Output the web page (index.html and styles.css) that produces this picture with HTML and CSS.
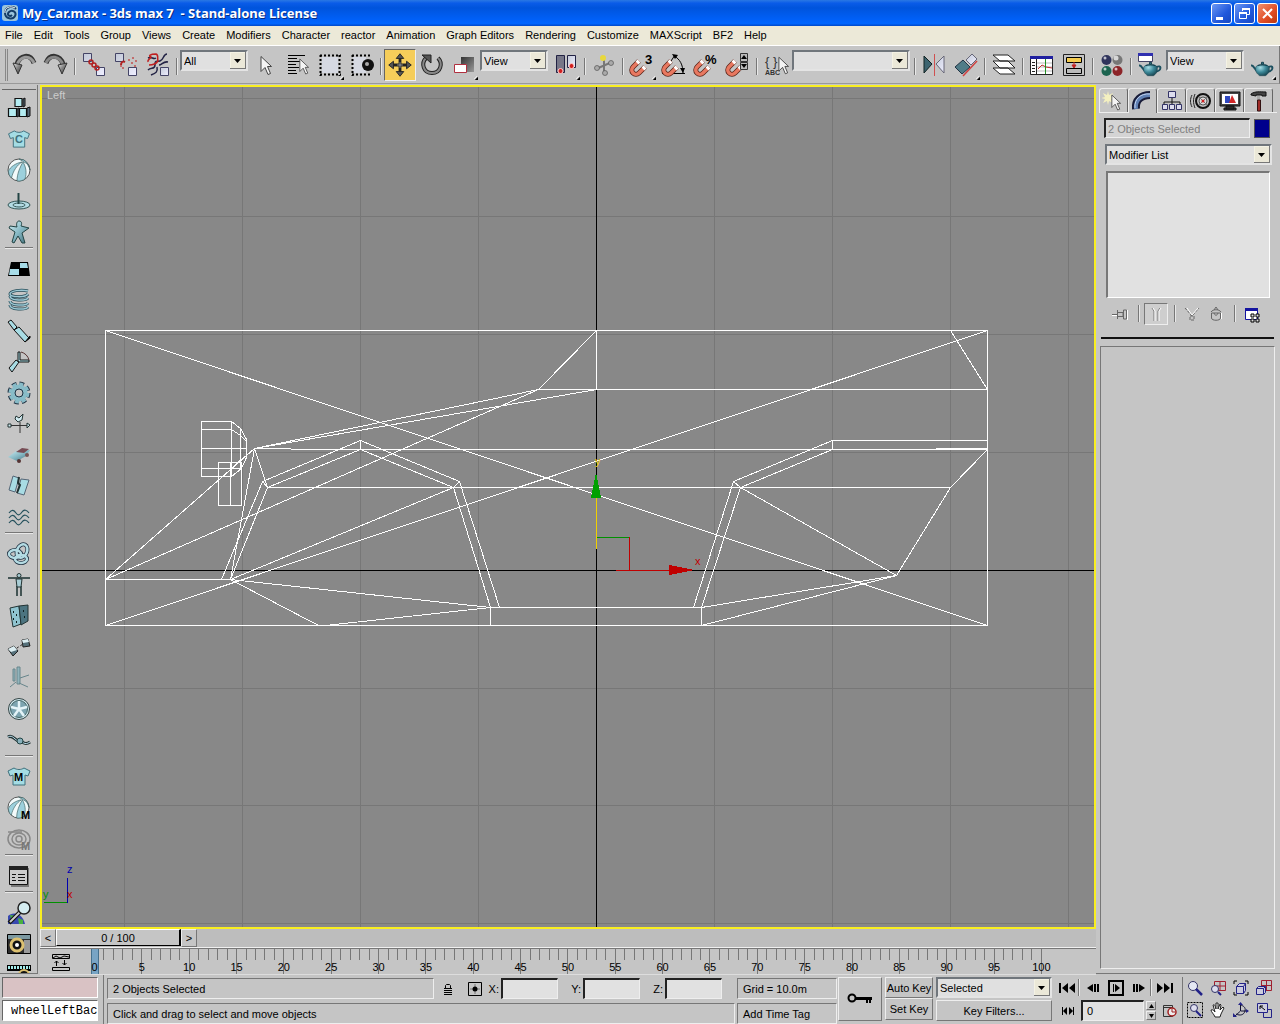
FILE: index.html
```html
<!DOCTYPE html>
<html lang="en">
<head>
<meta charset="utf-8">
<title>My_Car.max - 3ds max 7 - Stand-alone License</title>
<link rel="stylesheet" href="styles.css">
</head>
<body>
<svg class="defs" width="0" height="0" aria-hidden="true">
  <defs>
    <linearGradient id="teal" x1="0" y1="0" x2="1" y2="1"><stop offset="0" stop-color="#d2f0f4"/><stop offset=".5" stop-color="#86b8c4"/><stop offset="1" stop-color="#3d6874"/></linearGradient>
    <linearGradient id="metal" x1="0" y1="0" x2="1" y2="1"><stop offset="0" stop-color="#eee"/><stop offset=".45" stop-color="#888"/><stop offset="1" stop-color="#333"/></linearGradient>
    <linearGradient id="slab" x1="0" y1="0" x2="1" y2="1"><stop offset="0" stop-color="#333"/><stop offset="1" stop-color="#999"/></linearGradient>
    <linearGradient id="pale" x1="0" y1="0" x2="1" y2="1"><stop offset="0" stop-color="#c4cad8"/><stop offset="1" stop-color="#eef"/></linearGradient>
    <radialGradient id="pot" cx=".35" cy=".3" r=".8"><stop offset="0" stop-color="#a8dce4"/><stop offset=".5" stop-color="#3c8898"/><stop offset="1" stop-color="#123c48"/></radialGradient>
    <symbol id="magnet" viewBox="0 0 20 20"><path d="M10 4 4 10a4 4 0 0 0 6 6l6-6" fill="none" stroke="#5a2418" stroke-width="5"/><path d="M10 4 4 10a4 4 0 0 0 6 6l6-6" fill="none" stroke="#e87860" stroke-width="3.500"/><path d="m10 4-2 2M16 10l-2 2" stroke="#fff" stroke-width="4"/></symbol>
    <symbol id="cursor" viewBox="0 0 12 20"><path d="M1 1v15l4-4 3 7 2.500-1-3-7h4z" fill="#f4f4f4" stroke="#444"/></symbol>
    <symbol id="teapot" viewBox="0 0 24 16"><path d="M6 10 2 5 0 4M18 6c6-3 6 4-1 5" fill="none" stroke="#1c5060" stroke-width="2"/><path d="M5 6c2-4 12-4 14 0 1 5-2 8-4 9H9C6 13 4 10 5 6z" fill="url(#pot)" stroke="#143c48" stroke-width=".5"/><path d="M7 4.500c3-1 7-1 10 0" fill="none" stroke="#143c48"/><path d="M11 1h2v2h-2z" fill="#3c8898" stroke="#143c48"/></symbol>
    <symbol id="ball" viewBox="0 0 24 24"><circle cx="12" cy="12" r="11" fill="#f2fafa" stroke="#555"/><path d="M15 4C9 5 3 9 1.500 13c0 3 1 5 3 7C6 13 10 7 15 4zM16 4c-3 5-6 12-6 19 3 .5 6-.5 8-2 2-6 1-12-2-17zM17 4c3 1 5 4 6 8-.5-4-3-8-6-10l-5-1z" fill="#9cd0dc" stroke="#466" stroke-width=".7"/></symbol>
    <symbol id="shirt" viewBox="0 0 24 20"><path d="m1 4 6-3c3 2 7 2 10 0l6 3-2 5-3-1v10H6V8L3 9z" fill="#a4dce4" stroke="#40707c"/></symbol>
    <symbol id="flag" viewBox="0 0 5 5"><path d="M5 1v4H1z" fill="#000"/><path d="M0 4 4 0" stroke="#fff"/></symbol>
  </defs>
</svg>

<header class="titlebar">
  <svg class="logo" width="16" height="16" viewBox="0 0 16 16"><rect width="16" height="16" rx="3" fill="#9cc4dc"/><path d="M14 4C10 0 3 2 3 8s8 7 10 3-3-7-6-4 1 5 3 3" fill="none" stroke="#163c66" stroke-width="2"/><path d="M13 3C8 0 2 3 3 8" fill="none" stroke="#fff"/></svg>
  <h1>My_Car.max - 3ds max 7&nbsp; - Stand-alone License</h1>
  <button class="winbtn" aria-label="Minimize"><svg width="19" height="19" viewBox="0 0 19 19"><path d="M4 13h7v3H4z" fill="#fff"/></svg></button>
  <button class="winbtn" aria-label="Restore"><svg width="19" height="19" viewBox="0 0 19 19"><path d="M7.500 7V4.500h7v6H12M4.500 8.500h7v6h-7z" fill="none" stroke="#fff"/><path d="M7 4h8v2H7zM4 8h8v2H4z" fill="#fff"/></svg></button>
  <button class="winbtn close" aria-label="Close"><svg width="19" height="19" viewBox="0 0 19 19"><path d="m5 5 9 9m0-9-9 9" stroke="#fff" stroke-width="2"/></svg></button>
</header>

<nav class="menubar">
  <a href="#">File</a><a href="#">Edit</a><a href="#">Tools</a><a href="#">Group</a><a href="#">Views</a><a href="#">Create</a><a href="#">Modifiers</a><a href="#">Character</a><a href="#">reactor</a><a href="#">Animation</a><a href="#">Graph Editors</a><a href="#">Rendering</a><a href="#">Customize</a><a href="#">MAXScript</a><a href="#">BF2</a><a href="#">Help</a>
</nav>

<div class="toolbar">
  <button class="tool" aria-label="Undo"><svg viewBox="0 0 32 32"><path d="M26 14C22 4 12 6 9 15" fill="none" stroke="#333" stroke-width="5"/><path d="M26 14C22 5 12 7 9 16" fill="none" stroke="#999" stroke-width="3"/><path d="m5 14 9 2-4 9z" fill="url(#metal)" stroke="#333"/></svg></button>
  <button class="tool" aria-label="Redo"><svg viewBox="0 0 32 32"><path d="M6 14C10 4 20 6 23 15" fill="none" stroke="#333" stroke-width="5"/><path d="M6 14C10 5 20 7 23 16" fill="none" stroke="#888" stroke-width="3"/><path d="m27 14-9 2 4 9z" fill="url(#metal)" stroke="#333"/></svg></button>
  <span class="sep"></span>
  <button class="tool" aria-label="Select and Link"><svg viewBox="0 0 32 32"><g fill="url(#pale)" stroke="#446"><path d="M5.500 4.500h8v8h-8zM18.500 18.500h8v8h-8z"/></g><g fill="none" stroke="#b02020" stroke-width="1.500"><circle cx="13" cy="13" r="2"/><circle cx="16" cy="16" r="2"/><circle cx="19" cy="19" r="2"/></g></svg></button>
  <button class="tool" aria-label="Unlink Selection"><svg viewBox="0 0 32 32"><g fill="url(#pale)" stroke="#446"><path d="M5.500 4.500h8v8h-8zM18.500 18.500h8v8h-8z"/></g><path d="M11 16c0-3 2-4 4-3" fill="none" stroke="#b02020" stroke-width="2"/><path d="M18 11h2m2-2h2m-3 5h2m2-2h2m-3 5h2m-14 2h2m-4-2h2" stroke="#c05050" stroke-width="1.500"/></svg></button>
  <button class="tool" aria-label="Bind to Space Warp"><svg viewBox="0 0 32 32"><path d="M25 5c-4 0-3 6-7 7s-5-1-5 4-4 2-7 5m20-8c-5-1-6 3-9 3m-2 2c1 5-1 6-6 8M6 9c4-2 5 2 8 0" fill="none" stroke="#224" stroke-width="1.500"/><path d="M6 13c-1-3 3-3 3-5-3-1-1-3 5-3 3 1 1 4 2 7-2 3-4 4-9 4" fill="none" stroke="#c02020" stroke-width="1.500"/><path d="M18.500 18.500h8v8h-8z" fill="url(#pale)" stroke="#446"/></svg></button>
  <span class="sep"></span>
  <select class="combo w-short" aria-label="Selection filter"><option>All</option></select>
  <button class="tool" aria-label="Select Object"><svg viewBox="0 0 32 32"><use href="#cursor" x="10" y="6" width="12" height="21"/></svg></button>
  <button class="tool" aria-label="Select by Name"><svg viewBox="0 0 32 32"><path d="M6 6.500h17M6 9.500h9M6 12.500h12M6 15.500h8M6 18.500h11M6 21.500h8M6 24.500h9" stroke="#000"/><use href="#cursor" x="17" y="9" width="10" height="17"/></svg></button>
  <button class="tool" aria-label="Rectangular Selection Region"><svg viewBox="0 0 32 32"><path d="M8 8h16v16H8z" fill="#d6d9e2"/><path d="M6 6.500h21M6 25.500h21M6.500 6v21M25.500 6v21" stroke="#000" stroke-width="2" stroke-dasharray="2 2"/><use href="#flag" x="26" y="27" width="4" height="4"/></svg></button>
  <button class="tool" aria-label="Window / Crossing"><svg viewBox="0 0 32 32"><path d="M7 8h13v16H7z" fill="#d6d9e2"/><path d="M6 6.500h19M6 25.500h19M6.500 6v21" stroke="#000" stroke-width="2" stroke-dasharray="2 2"/><circle cx="22" cy="16" r="6" fill="#111"/><circle cx="21" cy="15" r="2" fill="#aaa"/></svg></button>
  <span class="sep"></span>
  <button class="tool active" aria-label="Select and Move"><svg viewBox="0 0 32 32"><path d="M16 7v18M7 16h18" stroke="#222" stroke-width="3"/><path d="m16 4 4 5h-8zM16 28l4-5h-8zM4 16l5-4v8zM28 16l-5-4v8z" fill="#555" stroke="#222"/><path d="M13 16h6M16 13v6" stroke="#999"/></svg></button>
  <button class="tool" aria-label="Select and Rotate"><svg viewBox="0 0 32 32"><path d="M22 9c5 5 3 15-6 15S5 14 10 9" fill="none" stroke="#222" stroke-width="4"/><path d="M22 9c5 5 3 15-6 15S5 14 10 9" fill="none" stroke="#888" stroke-width="2"/><path d="M6 6h9v8z" fill="#555" stroke="#222"/></svg></button>
  <button class="tool" aria-label="Select and Uniform Scale"><svg viewBox="0 0 32 32"><path d="M13 8h13v15H13z" fill="url(#slab)"/><path d="M6.500 15.500h12v8h-12z" fill="#fff" stroke="#b03040"/><use href="#flag" x="26" y="27" width="4" height="4"/></svg></button>
  <select class="combo w-short" aria-label="Reference coordinate system"><option>View</option></select>
  <button class="tool" aria-label="Use Pivot Point Center"><svg viewBox="0 0 32 32"><path d="M6.500 6.500h8v17h-8z" fill="#778" stroke="#224"/><path d="M17.500 6.500h8v12h-8z" fill="url(#pale)" stroke="#224"/><g fill="#d02020" stroke="#fcc"><circle cx="10.500" cy="22" r="2.500"/><circle cx="21.500" cy="17" r="2.500"/></g><use href="#flag" x="26" y="27" width="4" height="4"/></svg></button>
  <span class="sep"></span>
  <button class="tool" aria-label="Select and Manipulate"><svg viewBox="0 0 32 32"><path d="M8 20 24 13M16 9v15" stroke="#777" stroke-width="2"/><g fill="#aaa" stroke="#555" stroke-width=".7"><circle cx="9" cy="19" r="2.500"/><circle cx="23" cy="14" r="2.500"/><circle cx="17" cy="24" r="2.500"/></g><circle cx="15" cy="9" r="3" fill="#e8d83c"/></svg></button>
  <span class="sep"></span>
  <button class="tool" aria-label="3D Snap Toggle"><svg viewBox="0 0 32 32"><use href="#magnet" x="3" y="8" width="20" height="20"/><text class="glyph big" x="19" y="15">3</text><use href="#flag" x="26" y="27" width="4" height="4"/></svg></button>
  <button class="tool" aria-label="Angle Snap Toggle"><svg viewBox="0 0 32 32"><path d="M4 24.500h23M5 24 17 6M16 7c6 3 9 9 9 17" fill="none" stroke="#000"/><path d="m14 5 6 1-3 4zM22 19h5l-2 5z"/><use href="#magnet" x="3" y="8" width="20" height="20"/></svg></button>
  <button class="tool" aria-label="Percent Snap Toggle"><svg viewBox="0 0 32 32"><use href="#magnet" x="3" y="8" width="20" height="20"/><text class="glyph big" x="15" y="15">%</text></svg></button>
  <button class="tool" aria-label="Spinner Snap Toggle"><svg viewBox="0 0 32 32"><use href="#magnet" x="3" y="8" width="20" height="20"/><path d="M18.500 4.500h7v8h-7zM18.500 13.500h7v7h-7z" fill="#bbb" stroke="#333"/><path d="m22 6 3 4h-6zM22 19l3-4h-6z"/></svg></button>
  <span class="sep"></span>
  <button class="tool" aria-label="Named Selection Sets"><svg viewBox="0 0 32 32"><text class="glyph brace" x="5" y="17">{ }</text><text class="glyph tiny" x="5" y="26">ABC</text><use href="#cursor" x="18" y="7" width="11" height="19"/></svg></button>
  <select class="combo w-long" aria-label="Named selection set"><option></option></select>
  <span class="sep"></span>
  <button class="tool" aria-label="Mirror"><svg viewBox="0 0 32 32"><path d="m6 7 8 8-8 9z" fill="#3c6470" stroke="#122"/><path d="m26 7-8 8 8 9z" fill="url(#pale)" stroke="#667"/><path d="M16.500 5v22" stroke="#d05050"/></svg></button>
  <button class="tool" aria-label="Align"><svg viewBox="0 0 32 32"><path d="m5 18 8-7 7 7-8 7z" fill="#507c88" stroke="#234"/><path d="m16 11 6-6 5 5-6 6z" fill="url(#pale)" stroke="#667"/><path d="M13 27 27 12" stroke="#d04040" stroke-width="1.500"/><use href="#flag" x="26" y="27" width="4" height="4"/></svg></button>
  <span class="sep"></span>
  <button class="tool" aria-label="Layer Manager"><svg viewBox="0 0 32 32"><g fill="#fff" stroke="#222"><path d="M5 19h15l7 6H12zM5 12h15l7 7H12zM5 6h15l7 6H12z"/></g></svg></button>
  <span class="sep"></span>
  <button class="tool" aria-label="Curve Editor"><svg viewBox="0 0 32 32"><path d="M4.500 8.500h22v17h-22z" fill="#fff" stroke="#222"/><path d="M4 7h23v3H4z" fill="#2020a0"/><path d="M11 14h15M11 18h15M11 22h15" stroke="#bbb"/><path d="M6 13.500h3M6 16.500h3M6 19.500h3M6 22.500h3M10.500 10v15" stroke="#222"/><path d="m12 20 4-4 4 2 6 1" fill="none" stroke="#c03030"/><path d="M19.500 10v15" stroke="#209020"/></svg></button>
  <button class="tool" aria-label="Schematic View"><svg viewBox="0 0 32 32"><path d="M5.500 5.500h21v21h-21z" fill="none" stroke="#222"/><path d="M8.500 8.500h15v5h-15z" fill="#f4cc50" stroke="#000"/><path d="M8.500 19.500h15v5h-15z" fill="#bbb" stroke="#000"/><path d="M16 13v4m-2-1h4l-2 3z" fill="#c02020" stroke="#c02020"/></svg></button>
  <span class="sep"></span>
  <button class="tool" aria-label="Material Editor"><svg viewBox="0 0 32 32"><circle cx="10.500" cy="11" r="5" fill="#30345c"/><circle cx="21.500" cy="11" r="5" fill="#777"/><circle cx="10.500" cy="22" r="5" fill="#1c6450"/><circle cx="21.500" cy="22" r="5" fill="#8c2428"/><g fill="#fff" opacity=".7"><circle cx="9" cy="9" r="1.500"/><circle cx="20" cy="9" r="2.500"/><circle cx="9" cy="20" r="1.500"/><circle cx="20" cy="20" r="1.500"/></g></svg></button>
  <span class="sep"></span>
  <button class="tool" aria-label="Render Scene"><svg viewBox="0 0 32 32"><path d="M4.500 4.500h14v8h-14z" fill="#fff" stroke="#446"/><path d="M4 4h15v3H4z" fill="#3030b0"/><use href="#teapot" x="5" y="12" width="23" height="16"/></svg></button>
  <select class="combo w-mid" aria-label="Render type"><option>View</option></select>
  <button class="tool" aria-label="Quick Render"><svg viewBox="0 0 32 32"><use href="#teapot" x="5" y="12" width="23" height="16"/><use href="#flag" x="26" y="27" width="4" height="4"/></svg></button>
</div>

<main class="workspace">
  <aside class="reactor" aria-label="reactor toolbar">
    <button class="rtool" aria-label="Rigid Body Collection"><svg viewBox="0 0 24 24"><g fill="#b4ecf2" stroke="#111" stroke-width="1.200"><path d="M8 2.500h7v8H8zM1.500 12.500h8v8h-8zM12.500 12.500h7v8h-7z"/></g><path d="m16 3 2-1v8l-2 1zM20 12l3-1v9l-3 1zM10 13l2-1v8l-2 1z" fill="#567" stroke="#111"/></svg></button>
    <button class="rtool" aria-label="Cloth Collection"><svg viewBox="0 0 24 24"><use href="#shirt" y="3" width="24" height="19"/><text class="glyph mark" x="8" y="16">C</text></svg></button>
    <button class="rtool" aria-label="Soft Body Collection"><svg viewBox="0 0 24 24"><use href="#ball" width="24" height="24"/></svg></button>
    <button class="rtool" aria-label="Rope Collection"><svg viewBox="0 0 24 24"><ellipse cx="12" cy="16" rx="11" ry="4" fill="#b4dce4" stroke="#355"/><ellipse cx="12" cy="16" rx="6" ry="2" fill="none" stroke="#355"/><path d="M11.500 4v11" stroke="#244" stroke-width="2"/></svg></button>
    <button class="rtool" aria-label="Deforming Mesh Collection"><svg viewBox="0 0 24 24"><path d="M12 1c3 0 3 3 2 5l8 2-7 5 3 10h-3l-4-7-4 7-2-1 3-10-6-4 1-2 7 1c-1-3 0-6 2-6z" fill="url(#teal)" stroke="#244"/></svg></button>
    <span class="rsep"></span>
    <button class="rtool" aria-label="Plane"><svg viewBox="0 0 24 24"><path d="M4 5h17l2 14H1z"/><path d="M13 6h7l1 5h-8zM3 12h9v6H2z" fill="#a8dce8"/></svg></button>
    <button class="rtool" aria-label="Spring"><svg viewBox="0 0 24 24"><g fill="none" stroke="#264c58" stroke-width="3"><path d="M21 3C14 1 3 3 3 6s15 4 18 0M3 8c0 5 16 5 18 2M3 13c0 5 16 5 18 2M3 17c0 5 16 5 18 2"/></g><g fill="none" stroke="#9cc8d4" stroke-width="1.500"><path d="M21 3C14 1 3 3 3 6s15 4 18 0M3 8c0 5 16 5 18 2M3 13c0 5 16 5 18 2M3 17c0 5 16 5 18 2"/></g></svg></button>
    <button class="rtool" aria-label="Linear Dashpot"><svg viewBox="0 0 24 24"><path d="m1 3 3-2 6 7-3 3zM7 11l5-3 10 11-4 4z" fill="#a8dce4" stroke="#111"/><path d="m18 23 5-4v-2z" stroke="#111"/></svg></button>
    <button class="rtool" aria-label="Angular Dashpot"><svg viewBox="0 0 24 24"><path d="M11 2v10h11v-2h-9V2zM12 12l-3-2-7 8 3 4z" fill="#a8dce4" stroke="#111"/><path d="M14 2c4 1 7 4 8 8" fill="none" stroke="#533"/></svg></button>
    <button class="rtool" aria-label="Motor"><svg viewBox="0 0 24 24"><circle cx="12" cy="12" r="9.500" fill="none" stroke="#234" stroke-width="4" stroke-dasharray="4.500 3"/><circle cx="12" cy="12" r="9" fill="none" stroke="#88bcc8" stroke-width="3" stroke-dasharray="4 3.070"/><circle cx="12" cy="12" r="6" fill="none" stroke="#88bcc8" stroke-width="5"/><circle cx="12" cy="12" r="4" fill="none" stroke="#234"/></svg></button>
    <button class="rtool" aria-label="Wind"><svg viewBox="0 0 24 24"><path d="M1 13.500h22M13 10v11" stroke="#333"/><path d="m9 4 3 2 4-4-1 6-4 2-3-3zM1 12h3v3H1zM20 11l3 2-3 3z" fill="#cfeaf0" stroke="#233"/></svg></button>
    <button class="rtool" aria-label="Toy Car"><svg viewBox="0 0 24 24"><path d="M1 14 9 8l14-1-4 6-9 5z" fill="url(#teal)"/><path d="m9 9 6-4 7 1-5 4z" fill="#764c54"/><circle cx="12" cy="18" r="2" fill="#533"/><circle cx="20" cy="12" r="2" fill="#755"/></svg></button>
    <button class="rtool" aria-label="Fracture"><svg viewBox="0 0 24 24"><path d="m6 2 6 2-4 14-6-2zM14 5l8 1-5 15-7-2z" fill="#a8dce4" stroke="#567"/><path d="m12 3-1 6 2 2-3 8" fill="none" stroke="#233" stroke-width="2"/></svg></button>
    <button class="rtool" aria-label="Water"><svg viewBox="0 0 24 24"><path d="M2 8c3-4 5-3 7 0s4 2 6-1 5-2 7 1M2 13c3-4 5-3 7 0s4 2 6-1 5-2 7 1M2 18c3-4 5-3 7 0s4 2 6-1 5-2 7 1" fill="none" stroke="#24505c" stroke-width="1.200"/></svg></button>
    <span class="rsep"></span>
    <button class="rtool" aria-label="Constraint Solver"><svg viewBox="0 0 24 24"><g fill="none" stroke="#234" stroke-width="4"><ellipse cx="15" cy="9" rx="5" ry="7" transform="rotate(25 15 9)"/><ellipse cx="8" cy="12" rx="6" ry="4"/><ellipse cx="14" cy="17" rx="6" ry="4"/></g><g fill="none" stroke="#b4dce4" stroke-width="2.500"><ellipse cx="15" cy="9" rx="5" ry="7" transform="rotate(25 15 9)"/><ellipse cx="8" cy="12" rx="6" ry="4"/><ellipse cx="14" cy="17" rx="6" ry="4"/></g></svg></button>
    <button class="rtool" aria-label="Rag Doll Constraint"><svg viewBox="0 0 24 24"><path d="M1 5h22M12 1v12M10 13v10M14 13v10" stroke="#455" stroke-width="2"/><path d="M9 6h6l-1 8h-4z" fill="#a8ccd4" stroke="#233"/><circle cx="12" cy="2.500" r="2" fill="#a8ccd4" stroke="#233"/></svg></button>
    <button class="rtool" aria-label="Hinge Constraint"><svg viewBox="0 0 24 24"><path d="m3 4 9-2 2 18-8 3z" fill="#90c4d0" stroke="#233"/><path d="m12 2 9-1v16l-7 4z" fill="#4c7480" stroke="#233"/><path d="M6 8h1m2 3h1m-4 4h1m2 3h1m6-11h1m0 6h1" stroke="#122" stroke-width="2"/></svg></button>
    <button class="rtool" aria-label="Point-Point Constraint"><svg viewBox="0 0 24 24"><path d="m1 14 6-3 4 5-5 5zM15 5l6-1 2 7-7 1z" fill="#55707a" stroke="#222"/><path d="m1 14 6-3 3 4-6 2zM15 5l6-1 1 3-6 1z" fill="#dceef2"/><path d="m10 13 6-4" stroke="#222" stroke-dasharray="2 2"/></svg></button>
    <button class="rtool" aria-label="Prismatic Constraint"><svg viewBox="0 0 24 24"><path d="M6 3h2v12H6zM10 1h3v17h-3zM13 12l9-3M12 17l9 4M9 16l-6 5" fill="#90b4bc" stroke="#68868c"/></svg></button>
    <button class="rtool" aria-label="Car-Wheel Constraint"><svg viewBox="0 0 24 24"><circle cx="12" cy="12" r="10.500" fill="#cfe8ee" stroke="#344"/><circle cx="12" cy="12" r="8.500" fill="#7ca4b0" stroke="#466"/><path d="M12 12V4m0 8 8-2m-8 2 5 7m-5-7-5 7m5-7-8-2" stroke="#e4f4f8" stroke-width="2.500"/></svg></button>
    <button class="rtool" aria-label="Point-Path Constraint"><svg viewBox="0 0 24 24"><path d="M1 9c5-3 7 4 11 4s5 5 11 1" fill="none" stroke="#233" stroke-width="3"/><path d="M1 9c5-3 7 4 11 4s5 5 11 1" fill="none" stroke="#bde"/><circle cx="13" cy="13" r="3" fill="#88b0bc" stroke="#244"/></svg></button>
    <span class="rsep"></span>
    <button class="rtool" aria-label="Cloth Modifier"><svg viewBox="0 0 24 24"><use href="#shirt" y="2" width="24" height="20"/><text class="glyph mark dark" x="7" y="16">M</text></svg></button>
    <button class="rtool" aria-label="Soft Body Modifier"><svg viewBox="0 0 24 24"><use href="#ball" width="23" height="23"/><text class="glyph mark dark" x="14" y="23">M</text></svg></button>
    <button class="rtool" aria-label="Rope Modifier" disabled><svg viewBox="0 0 24 24"><g fill="none" stroke="#888" stroke-width="1.500"><ellipse cx="12" cy="12" rx="11" ry="9"/><ellipse cx="12" cy="12" rx="7" ry="6"/><ellipse cx="12" cy="12" rx="3" ry="3"/><path d="M1 5h14"/></g><text class="glyph mark dim" x="14" y="23">M</text></svg></button>
    <span class="rsep"></span>
    <button class="rtool" aria-label="Property Editor"><svg viewBox="0 0 24 24"><path d="M4 4h18v19H4z" fill="#777"/><path d="M2.500 2.500h18v18h-18z" fill="#ccc" stroke="#111"/><path d="M2 2h19v4H2z" fill="#222"/><path d="M5 10.500h4m2 0h7M5 13.500h3m3 0h7M5 16.500h4m2 0h7" stroke="#111"/></svg></button>
    <span class="rsep"></span>
    <button class="rtool" aria-label="Analyze World"><svg viewBox="0 0 24 24"><path d="M1 15c4-4 14-4 17 8H1z" fill="#3848b0"/><path d="m3 14 6 1-4 6zM11 17l5 2v4h-4z" fill="#48b040"/><path d="M13 11 2 22" stroke="#111" stroke-width="4"/><path d="M13 11 3 21" stroke="#ccc" stroke-width="2"/><circle cx="17" cy="7" r="6" fill="#d4ecf0" stroke="#222" stroke-width="1.500"/></svg></button>
    <button class="rtool" aria-label="Preview Animation"><svg viewBox="0 0 24 24"><path d="M.5 2.500h23v19H.5z" fill="#2c2c2c" stroke="#000"/><path d="M1 3h22v4H1z" fill="#7c98a0"/><path d="M17 8h6v13h-6z" fill="#999"/><circle cx="10" cy="13" r="6" fill="#111" stroke="#dcc070" stroke-width="3"/><circle cx="10" cy="13" r="2" fill="#fff"/></svg></button>
    <button class="rtool" aria-label="Create Animation"><svg viewBox="0 0 24 24"><path d="M0 2h24v6H0z"/><path d="M1 4.500h22" stroke="#a4ecec" stroke-width="3" stroke-dasharray="2 1"/><circle cx="17" cy="12" r="5" fill="#111" stroke="#dcc070" stroke-width="2"/></svg></button>
  </aside>

  <section class="center">
    <div class="viewport">
      <svg class="scene" viewBox="42 87 1052 840" preserveAspectRatio="xMidYMid slice" role="img" aria-label="Left view wireframe">
        <path class="grid" d="M124.500 87v840M242.500 87v840M360.500 87v840M478.500 87v840M714.500 87v840M832.500 87v840M950.500 87v840M1068.500 87v840M42 98.500h1052M42 216.500h1052M42 334.500h1052M42 452.500h1052M42 688.500h1052M42 805.500h1052M42 923.500h1052"/>
        <path class="axis" d="M596.500 87v840M42 570.500h1052"/>
        <path class="wire" d="M105.500 330.500h882v295h-882zM105.500 330.500l882 295M105.500 625.500l882-295
          M105.500 579.500h125M105.500 579.500l149-131M105.500 579.500l433-190M254.500 448.500l284-59M254.500 448.500l342-59
          M254.500 448.500h36M290.500 449.500h697M254.500 448.500l13 39M254.500 448.500l-24 131
          M221.500 579.500l41-98 98-41 99 41 40 126M230.500 579.500l37-92 93-38 93 38 37 120M262.500 481.500l5 6M459.500 481.500l-6 6M360.500 440.500v9
          M267.500 487.500h683M230.500 579.500l223-92M230.500 579.500l260 28M230.500 579.500l88 46M490.500 607.500l-165 18
          M490.500 625.500v-18h211v18M596.500 330.500v59M596.500 330.500l-58 59h449M950.500 330.500l37 59
          M987.500 440.500h-155v9M832.500 440.500l-99 41-40 126M832.500 449.500l-92 38-39 120M733.500 481.500l7 6
          M740.500 487.500l156 88M987.500 449.500l-37 38-54 88-195 32M701.500 625.500l195-50M936 448.500h51
          M231.500 421.500h-30v55h30zM201.500 429.500h30M201.500 448.500h45M201.500 468.500h40M231.500 421.500l9 7 6 11v18l-5 11-10 8M231.500 429.500l9 6 6 6M240.500 428.500v40M231.500 468.500l14-13
          M218.500 462.500h23v43h-23zM230.500 462.500v43"/>
        <path class="yellow" d="M596.500 498v51"/>
        <path class="green" d="M597 537.500h32M44 902.500h23"/>
        <path class="red" d="M629.500 537v33M616 570.500h54"/>
        <path class="blue" d="M67.500 878v25"/>
        <path fill="#00a000" d="M596 472l5 26h-10z"/>
        <path fill="#c00000" d="M694 570l-25 5v-10z"/>
        <text class="mark-y" x="595" y="465">y</text>
        <text class="mark-x" x="695" y="565">x</text>
        <text class="mark-z" x="67" y="873">z</text>
        <text class="mark-g" x="43" y="898">y</text>
        <text class="mark-x" x="67" y="898">x</text>
        <text class="view-name" x="47" y="99">Left</text>
      </svg>
    </div>
    <div class="timeslider">
      <button class="step" aria-label="Previous frame">&lt;</button>
      <button class="thumb">0 / 100</button>
      <button class="step" aria-label="Next frame">&gt;</button>
    </div>
    <div class="trackbar">
      <button class="curve" aria-label="Open Mini Curve Editor"><svg width="18" height="18" viewBox="0 0 18 18"><path d="M.5 1.500h17v4H.5zM.5 14.500h17v3H.5zM1 5l3-2 4 2 4-2 5 1M4.500 13V8m-2 2 2-2 2 2M12.500 7v5m-2-2 2 2 2-2" fill="none" stroke="#000"/></svg></button>
      <div class="ruler" id="ruler"></div>
    </div>
  </section>

  <aside class="panel">
    <div class="tabs">
      <button class="tab" aria-label="Create"><svg viewBox="0 0 24 22"><path d="m6 1 1 4 4-2-2 4 4 1-4 1 2 4-4-2-1 4-1-4-4 2 2-4-4-1 4-1-2-4 4 2z" fill="#f4f0c0"/><use href="#cursor" x="9" y="4" width="10" height="17"/></svg></button>
      <button class="tab on" aria-label="Modify"><svg viewBox="0 0 24 22"><path d="M5 19C4 10 10 5 19 5" fill="none" stroke="#181c38" stroke-width="8"/><path d="M5 19C4 10 10 5 19 5" fill="none" stroke="#6080b4" stroke-width="4"/><path d="M4 18C3 9 10 3 19 4" fill="none" stroke="#c4d4f0"/></svg></button>
      <button class="tab" aria-label="Hierarchy"><svg viewBox="0 0 24 22"><path d="M12 8v7M4 15V12h16v3" fill="none" stroke="#111"/><path d="M8.500 1.500h7v6h-7zM2.500 14.500h5v5h-5zM9.500 14.500h5v5h-5zM16.500 14.500h5v5h-5z" fill="#dde" stroke="#336"/></svg></button>
      <button class="tab" aria-label="Motion"><svg viewBox="0 0 24 22"><path d="M3 5c-2 4-2 8 0 12M6 4c-2 5-2 9 0 14" fill="none" stroke="#222"/><circle cx="14" cy="11" r="7" fill="#bbb" stroke="#111" stroke-width="2"/><circle cx="14" cy="11" r="4" fill="#ddd" stroke="#555"/><path d="M10 7l8 8m0-8-8 8" stroke="#777"/><circle cx="14" cy="11" r="1.500" fill="#c22"/></svg></button>
      <button class="tab" aria-label="Display"><svg viewBox="0 0 24 22"><path d="M2 2h20v14H2zM8 16h8v3H8zM6 18h12v2H6z" fill="#444" stroke="#111"/><path d="M4 4h16v10H4z" fill="#fff"/><path d="M7 6h5v7H7z" fill="#3048c0"/><path d="m14 5 4 8h-7z" fill="#d02828"/></svg></button>
      <button class="tab" aria-label="Utilities"><svg viewBox="0 0 24 22"><path d="M4 4c4-3 9-2 15-2v4h-4V5H9v1L4 5z" fill="#444" stroke="#111"/><path d="M10 6h3v5h-3z" fill="#aaa"/><path d="M10.500 10h3v11h-3z" fill="#a02c28" stroke="#311"/></svg></button>
    </div>
    <div class="name-row">
      <input class="name" aria-label="Object name" value="2 Objects Selected" disabled>
      <button class="swatch" aria-label="Object color"></button>
    </div>
    <select class="combo modifier" aria-label="Modifier"><option>Modifier List</option></select>
    <div class="stack" role="listbox" aria-label="Modifier stack"></div>
    <div class="stack-tools">
      <button class="mini" aria-label="Pin Stack"><svg viewBox="0 0 20 20"><path d="M2 10.500h5M7.500 6v9M8 8.500h5v4H8M13.500 6v9h3V6z" fill="none" stroke="#666"/><path d="M2 11.500h5M17.500 6v10" stroke="#fff"/></svg></button>
      <span class="sep"></span>
      <button class="mini boxed" aria-label="Show End Result"><svg viewBox="0 0 20 20"><path d="m6 4 2 3v10M14 4l-2 3v10" fill="none" stroke="#777"/><path d="m7 4 2 3v10M15 4l-2 3v10" fill="none" stroke="#fff"/></svg></button>
      <span class="sep"></span>
      <button class="mini" aria-label="Make Unique"><svg viewBox="0 0 20 20"><path d="m3 4 7 8 7-8M8 12h4v4H8z" fill="none" stroke="#666" stroke-dasharray="3 1"/><path d="m5 4 5 7 6-7" fill="none" stroke="#fff"/></svg></button>
      <button class="mini" aria-label="Remove Modifier"><svg viewBox="0 0 20 20"><path d="M5.500 9v5c0 3 9 3 9 0V9zM5 8c2-3 8-3 10 0M8 6l2-3 2 3M8 9c1 3 3 3 4 0" fill="none" stroke="#666"/><path d="M15.500 9v6" stroke="#fff"/></svg></button>
      <span class="sep"></span>
      <button class="mini" aria-label="Configure Modifier Sets"><svg viewBox="0 0 20 20"><path d="M3.500 4.500h12v11h-12z" fill="#fff" stroke="#1414a0"/><path d="M3 4h13v3H3z" fill="#1414a0"/><path d="M9 10h3v3H9zM14 10h3v3h-3zM9 15h3v3H9zM14 15h3v3h-3z" fill="#ddd" stroke="#000"/></svg></button>
    </div>
    <div class="rollup"></div>
  </aside>
</main>

<footer class="status">
  <div class="listener">
    <input class="macro" aria-label="Macro recorder">
    <input class="script" aria-label="MAXScript listener" value="wheelLeftBack">
  </div>
  <div class="messages">
    <div class="line">
      <output class="sunken">2 Objects Selected</output>
      <button class="lock" aria-label="Selection Lock Toggle"><svg width="12" height="14" viewBox="0 0 12 14"><path d="M3.500 6V3.500l1-1h3l1 1V6" fill="none" stroke="#000"/><path d="M2 6.500h8M2 8.500h8M2 10.500h8M2 12.500h8" stroke="#000"/></svg></button>
      <button class="lock" aria-label="Absolute Mode Transform Type-In"><svg width="16" height="16" viewBox="0 0 16 16"><path d="M1.500 1.500h13v13h-13z" fill="none" stroke="#000"/><path d="M8 3v10M3 8h10" stroke="#777"/><circle cx="8" cy="8" r="2.500"/></svg></button>
      <label for="cx">X:</label><input class="coord" id="cx">
      <label for="cy">Y:</label><input class="coord" id="cy">
      <label for="cz">Z:</label><input class="coord" id="cz">
    </div>
    <output class="sunken prompt">Click and drag to select and move objects</output>
  </div>
  <div class="gridinfo">
    <output class="sunken">Grid = 10.0m</output>
    <button class="sunken tag">Add Time Tag</button>
  </div>
  <button class="raised key" aria-label="Set Keys"><svg width="26" height="14" viewBox="0 0 26 14"><circle cx="5" cy="6" r="3.500" fill="none" stroke="#000" stroke-width="2"/><path d="M9 5h16v3h-1v3h-2V8h-1v3h-2V8H9z"/></svg></button>
  <div class="keys">
    <button class="raised">Auto Key</button>
    <button class="raised">Set Key</button>
  </div>
  <div class="filters">
    <select class="combo" aria-label="Key set"><option>Selected</option></select>
    <button class="raised">Key Filters...</button>
  </div>
  <div class="playback">
    <div class="line">
      <button class="play" aria-label="Go to Start"><svg width="18" height="12" viewBox="0 0 18 12"><path d="M1 1h2v10H1zM10 1v10L4 6zM17 1v10l-6-5z"/></svg></button>
      <span class="sep"></span>
      <button class="play" aria-label="Previous Frame"><svg width="18" height="12" viewBox="0 0 18 12"><path d="M9 2v8L3 6zM10 2h2v8h-2zM13 2h2v8h-2z"/></svg></button>
      <button class="play" aria-label="Play"><svg width="18" height="16" viewBox="0 0 18 16"><path d="M2 1h14v14H2z" fill="none" stroke="#000" stroke-width="2"/><path d="M6 4h1v8H6zM8 4l5 4-5 4z"/></svg></button>
      <button class="play" aria-label="Next Frame"><svg width="18" height="12" viewBox="0 0 18 12"><path d="m9 2 6 4-6 4zM6 2h2v8H6zM3 2h2v8H3z"/></svg></button>
      <span class="sep"></span>
      <button class="play" aria-label="Go to End"><svg width="18" height="12" viewBox="0 0 18 12"><path d="M15 1h2v10h-2zM8 1v10l6-5zM1 1v10l6-5z"/></svg></button>
    </div>
    <div class="line">
      <button class="play mode" aria-label="Key Mode Toggle"><svg width="12" height="10" viewBox="0 0 12 10"><path d="M0 1h1v8H0zM11 1h1v8h-1zM5 1v8L1 5zM7 1v8l4-4z"/></svg></button>
      <input class="frame" type="text" aria-label="Current frame" value="0">
      <span class="spinner"><button aria-label="Up"><svg width="7" height="4" viewBox="0 0 7 4"><path d="M3.500 0 6 4H1z"/></svg></button><button aria-label="Down"><svg width="7" height="4" viewBox="0 0 7 4"><path d="M3.500 4 6 0H1z"/></svg></button></span>
      <button class="play" aria-label="Time Configuration"><svg width="14" height="14" viewBox="0 0 14 14"><path d="M.5 1.500h9v11h-9zM1 3.500h8" fill="none" stroke="#333"/><circle cx="9" cy="8" r="4" fill="#eee" stroke="#a02020" stroke-width="1.500"/><path d="M9 5v3h3" fill="none" stroke="#a02020"/></svg></button>
    </div>
  </div>
  <div class="nav">
    <button aria-label="Zoom"><svg viewBox="0 0 16 16"><circle cx="6" cy="6" r="4.500" fill="#e4e8f4" stroke="#336"/><path d="m9 9 6 6" stroke="#228" stroke-width="2.500"/></svg></button>
    <button aria-label="Zoom All"><svg viewBox="0 0 16 16"><path d="M4.500 1.500h11v9h-11zM10 1v10M4 6h12" fill="none" stroke="#a02030"/><circle cx="5" cy="9" r="3.500" fill="#dde" stroke="#336"/><path d="m8 12 3 3" stroke="#228" stroke-width="2"/></svg></button>
    <button aria-label="Zoom Extents"><svg viewBox="0 0 16 16"><path d="M3.500 6.500h7v7h-7zM3.500 6.500l3-3h6v7l-2 3M10.500 6.500l2-3" fill="#ccd" stroke="#228"/><path d="M1 4V1h3M12 1h3v3M1 12v3h3M12 15h3v-3" fill="none" stroke="#000"/></svg></button>
    <button aria-label="Zoom Extents All"><svg viewBox="0 0 16 16"><path d="M5.500.5h10v10h-10zM10.500 0v11M5 5.500h11" fill="none" stroke="#a02030"/><path d="M.5 8.500h7v6h-7zM.5 8.500l2-2h7v6l-2 2M7.500 8.500l2-2" fill="#ccd" stroke="#228"/></svg></button>
    <button aria-label="Region Zoom"><svg viewBox="0 0 16 16"><path d="M.5.500h15v15H.5z" fill="none" stroke="#000" stroke-dasharray="2 1"/><circle cx="7" cy="6" r="3.500" fill="#dde" stroke="#336"/><path d="m9 9 5 5" stroke="#228" stroke-width="2"/></svg></button>
    <button aria-label="Pan"><svg viewBox="0 0 16 16"><path d="M5 15c-1-3-4-5-4-7 2-1 3 1 4 2L3 3c2-1 2 1 3 4V1h2v6l2-5 1 1-1 5 3-3 1 1-3 6-1 3z" fill="#fff" stroke="#222"/></svg></button>
    <button aria-label="Arc Rotate"><svg viewBox="0 0 16 16"><path d="M7.500 2v7L2 14M8 9h7M3 12c4 2 8 1 9-3S10 4 8 3" fill="none" stroke="#113"/><path d="m5 3 2.500-3L10 3zM0 15v-4l4 4zM13 7l3 2-3 2z" fill="#228"/></svg></button>
    <button aria-label="Min/Max Toggle"><svg viewBox="0 0 16 16"><path d="M7.500 7.500h8v8h-8z" fill="none" stroke="#228"/><path d="M1.500 1.500h10v9h-10z" fill="#ccd" stroke="#228"/><path d="M4 4l5 4M4 7V4h3" fill="none" stroke="#000"/></svg></button>
  </div>
</footer>
<script src="ruler.js"></script>
</body>
</html>
```
FILE: ruler.js
```js
// Builds the frame ticks of the track bar: one per frame, numbered every fifth.
const ruler = document.getElementById("ruler");
for (let frame = 0; frame <= 100; frame++) {
  const tick = document.createElement("span");
  tick.className = "tick";
  if (frame % 5 === 0) {
    tick.classList.add("major");
    const label = document.createElement("b");
    label.textContent = frame;
    tick.append(label);
  }
  if (frame === 0) tick.classList.add("current");
  ruler.append(tick);
}
```
FILE: styles.css
```css
* { box-sizing: border-box; }
body {
  margin: 0;
  min-height: 100vh;
  display: flex;
  flex-direction: column;
  background: #c5c5c5;
  color: #000;
  font: 11px/14px "Liberation Sans", Arial, sans-serif;
}
button, input, select { font: inherit; color: inherit; margin: 0; padding: 0; border: 0; border-radius: 0; background: none; }
button { display: flex; align-items: center; justify-content: center; }
svg { display: block; flex: none; }
.defs { position: absolute; }
.sep { flex: none; width: 6px; height: 17px; border-left: 1px solid #777; margin: 0; background: linear-gradient(90deg, #e8e8e8 1px, transparent 1px); }

/* title bar and menu */
.titlebar {
  display: flex; align-items: center; gap: 2px;
  height: 26px; padding: 0 2px;
  background: linear-gradient(#2a78e4, #0a5ce8 12%, #0054dc 30%, #0060f8 75%, #0066ff 90%, #0048c8);
}
.titlebar h1 {
  flex: 1; margin: 0 0 0 2px; color: #fff; white-space: nowrap;
  font: 700 13px/20px "Noto Sans", sans-serif; text-shadow: 1px 1px #0a2c80;
}
.winbtn { width: 21px; height: 21px; border: 1px solid #fff; border-radius: 3px; background: linear-gradient(135deg, #6c98f4, #2058dc 60%, #1848c0); }
.winbtn.close { background: linear-gradient(135deg, #f09070, #e04c24 60%, #b83810); }
.menubar {
  display: flex; gap: 11px; height: 20px; padding: 2px 5px 0;
  background: #ece9d8; border-bottom: 1px solid #fff;
}
.menubar a { color: #000; text-decoration: none; white-space: nowrap; }

/* main toolbar */
.toolbar { display: flex; align-items: center; height: 38px; padding: 1px 1px 0 5px; border-right: 1px solid #777; border-bottom: 1px solid #999; }
.toolbar::before { content: ""; width: 4px; height: 32px; border: solid #888; border-width: 0 1px; }
.toolbar .sep { margin: 2px 0 0 2px; width: 4px; }
.tool { flex: none; width: 32px; height: 32px; }
.tool svg { width: 32px; height: 32px; }
.tool.active { background: #f5cd5a; border: 1px solid; border-color: #666 #eee #eee #666; }
.tool.active svg { width: 30px; height: 30px; }
.combo {
  appearance: none; height: 21px; padding: 0 20px 0 2px;
  border: 2px solid; border-color: #70767c #e4e4e4 #e4e4e4 #70767c;
  background: #e0e0e0 url("data:image/svg+xml,%3Csvg xmlns='http://www.w3.org/2000/svg' width='16' height='17'%3E%3Cpath d='M0 0h16v17H0z' fill='%23777'/%3E%3Cpath d='M0 0h15v16H0z' fill='%23f4f2e4'/%3E%3Cpath d='M1 1h14v15H1z' fill='%23ebe8d8'/%3E%3Cpath d='M4 7h7L7.500 11z'/%3E%3C/svg%3E") right center no-repeat;
}
.toolbar .combo { flex: none; align-self: flex-start; margin: 3px 2px 0 0; }
.w-short { width: 68px; }
.w-mid { width: 78px; }
.w-long { width: 118px; }
.glyph { font-family: "Liberation Sans", Arial, sans-serif; font-weight: 700; }
.big { font-size: 13px; }
.brace { font-size: 13px; font-weight: 400; fill: #333; }
.tiny { font-size: 7px; fill: #333; }
.mark { font-size: 11px; fill: #40707c; }
.mark.dark { fill: #000; }
.mark.dim { fill: #777; }

/* workspace */
.workspace { flex: 1; display: flex; min-height: 0; }
.reactor {
  width: 38px; height: 889px; flex: none; overflow: hidden;
  display: flex; flex-direction: column; align-items: center;
  padding: 7px 0 0; margin: 1px 0; border-right: 1px solid #777; border-bottom: 1px solid #777;
}
.reactor::before { content: ""; flex: none; width: 34px; height: 1px; margin: -3px 0 2px; background: #666; }
.rtool { flex: none; width: 32px; height: 31px; }
.rtool svg { width: 24px; height: 24px; }
.rsep { flex: none; width: 28px; height: 6px; border-top: 1px solid #777; background: linear-gradient(#e8e8e8 1px, transparent 1px); }
.center { flex: 1; min-width: 0; display: flex; flex-direction: column; margin: 1px 0 0 2px; }
.viewport { flex: 1; min-height: 0; display: flex; border: 2px solid #f8ee20; background: #888; }
.scene { flex: 1; width: 100%; height: 840px; shape-rendering: crispEdges; }
.scene path[class] { fill: none; }
.grid { stroke: #777; }
.axis { stroke: #000; }
.wire { stroke: #fff; }
.yellow { stroke: #f0d000; }
.green { stroke: #009000; }
.red { stroke: #c00000; }
.blue { stroke: #0000b0; }
.scene text { font: 11px "Liberation Sans", Arial, sans-serif; }
.scene .mark-y { fill: #f0d000; }
.scene .mark-x { fill: #c00000; }
.scene .mark-z { fill: #0000b0; }
.scene .mark-g { fill: #009000; }
.scene .view-name { fill: #ccc; }
.timeslider { display: flex; height: 19px; border-bottom: 1px solid #f0f0f0; background: #bdbdbd; }
.step { width: 16px; height: 18px; background: #c5c5c5; border: 1px solid; border-color: #eee #777 #777 #eee; }
.thumb { width: 125px; height: 17px; background: #c5c5c5; border: 1px solid; border-color: #fff #000 #000 #fff; border-right-width: 2px; }
.trackbar { display: flex; height: 27px; border-top: 1px solid #777; border-bottom: 1px solid #ddd; }
.curve { width: 42px; margin-right: 12px; }
.ruler { flex: 1; display: flex; justify-content: space-between; margin-right: 53px; }
.tick { width: 1px; height: 11px; background: #777; display: flex; justify-content: center; }
.tick.major { height: 25px; }
.tick b { font-weight: 400; margin-top: 11px; }
.tick.current { background: none; }
.tick.current b { flex: none; width: 8px; height: 25px; margin: 0; padding-top: 11px; text-align: center; background: #78a4c4; border: solid #46708c; border-width: 0 1px; }

/* command panel */
.panel { width: 184px; flex: none; padding: 4px; display: flex; flex-direction: column; border-bottom: 1px solid #777; margin-bottom: 1px; }
.tabs { display: flex; margin: 0 -1px; border-bottom: 1px solid #eee; }
.tab { width: 29px; height: 24px; border: solid; border-width: 1px 1px 0; border-color: #eee #666 #eee #eee; border-radius: 3px 3px 0 0; }
.tab.on { margin-bottom: -1px; height: 25px; background: #c5c5c5; }
.tab svg { width: 24px; height: 22px; }
.name-row { display: flex; gap: 4px; margin: 5px 6px 6px 4px; }
.name { flex: 1; min-width: 0; height: 20px; padding: 0 2px; border: 2px solid; border-color: #222 #eee #eee #222; border-right-width: 1px; border-bottom-width: 1px; background: #d4d4d4; color: #808080; }
.swatch { width: 16px; height: 19px; background: #00008c; border: 1px solid #555; margin-top: 1px; }
.modifier { margin: 0 4px 6px 5px; }
.stack { margin: 0 6px; height: 127px; border: 2px solid; border-color: #777 #fff #fff #777; border-bottom-width: 1px; border-right-width: 1px; background: #e1e1e1; }
.stack-tools { display: flex; align-items: center; height: 31px; margin: 0 5px; padding-left: 3px; }
.stack-tools .sep { margin: 0 0 0 6px; }
.mini { width: 24px; height: 22px; }
.mini svg { width: 20px; height: 20px; }
.mini.boxed { border: 1px solid; border-color: #777 #eee #eee #777; background: #cecece; }
.rollup { position: relative; flex: 1; margin: 17px 1px 0 0; border: 1px solid; border-color: #777 #eee #eee #777; }
.rollup::before { content: ""; position: absolute; left: 0; right: 0; top: -10px; height: 2px; background: #111; }

/* status bar */
.status { display: flex; height: 49px; }
.status .line { display: flex; align-items: center; }
.listener { width: 104px; padding: 2px 6px 0 2px; display: grid; gap: 2px; align-content: start; border-right: 1px solid #777; }
.listener input { width: 96px; height: 21px; border: 1px solid; border-color: #666 #fff #fff #666; }
.listener .macro { background: #d9c2c4; }
.listener .script { padding-left: 8px; background: #fff; font: 12px/18px "Liberation Mono", monospace; }
.messages { flex: 1; min-width: 0; margin: 3px 2px 0 3px; display: flex; flex-direction: column; gap: 4px; }
.sunken { display: block; height: 21px; padding: 3px 5px; border: 1px solid; border-color: #777 #eee #eee #777; white-space: nowrap; }
.messages .line { padding-right: 13px; }
.messages .line .sunken { flex: 1; }
.lock { width: 27px; height: 20px; }
.messages label { width: 17px; text-align: right; padding-right: 2px; margin-left: 8px; }
.messages label:first-of-type { margin-left: -4px; }
.coord { width: 57px; height: 21px; border: 1px solid; border-width: 2px 1px 1px 2px; border-color: #222 #eee #eee #222; background: #e1e1e1; }
.gridinfo { width: 100px; margin-top: 3px; display: flex; flex-direction: column; gap: 4px; }
.tag { width: 100%; text-align: left; }
.raised { border: 1px solid; border-color: #eee #777 #777 #eee; }
.key { width: 44px; height: 44px; margin: 2px 3px 0 1px; }
.keys { width: 48px; margin: 2px 3px 0 0; display: grid; align-content: start; grid-template-rows: 21px 22px; }
.filters { width: 116px; margin: 2px 3px 0 0; display: grid; align-content: start; gap: 2px; grid-template-rows: 21px 21px; }
.playback { width: 127px; margin-top: 2px; display: grid; align-content: start; gap: 2px; grid-template-rows: 21px 21px; }
.play { width: 23px; height: 21px; }
.play.mode { width: 26px; }
.playback .sep { width: 3px; }
.frame { width: 63px; height: 21px; padding: 0 4px; border: solid; border-width: 2px 1px 1px 2px; border-color: #222 #eee #eee #222; background: #e1e1e1; }
.spinner { display: grid; gap: 1px; margin: 0 2px; }
.spinner button { width: 10px; height: 9px; border: 1px solid; border-color: #eee #777 #777 #eee; }
.nav { display: grid; grid-template-columns: repeat(4, 23px); grid-template-rows: 22px 22px; margin: 2px 5px 0 0; align-content: start; border-left: 1px solid #777; }
.nav svg { width: 16px; height: 16px; }
```
